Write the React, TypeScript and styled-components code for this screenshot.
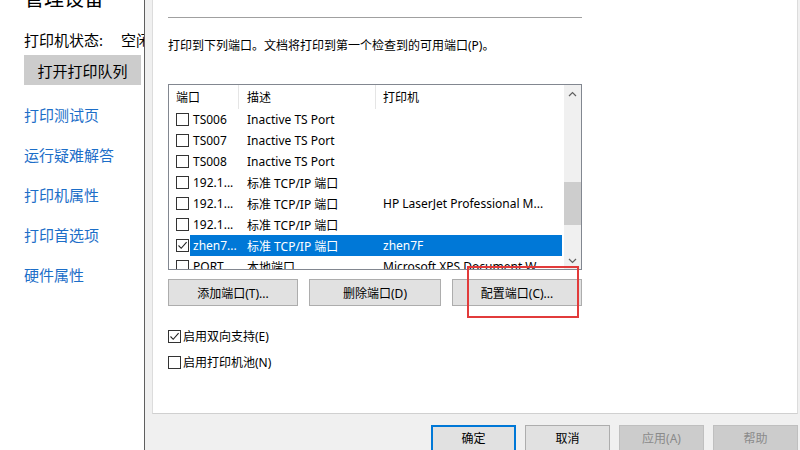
import React from "react";
import styled, { createGlobalStyle } from "styled-components";

const Global = createGlobalStyle`
  html, body { margin: 0; padding: 0; background: #fff; }
  body { width: 800px; height: 450px; overflow: hidden; }
  * { box-sizing: border-box; }
`;

const FONT = `"Segoe UI", "Noto Sans", "Noto Sans CJK SC", sans-serif`;

const Screen = styled.div`
  width: 800px;
  height: 450px;
  display: flex;
  overflow: hidden;
  font-family: ${FONT};
  color: #000;
`;

const LeftPane = styled.div`
  width: 144px;
  flex: none;
  background: #fff;
  overflow: hidden;
  padding-left: 24px;
  display: flex;
  flex-direction: column;
  align-items: flex-start;
`;

const Heading = styled.div`
  font-size: 20px;
  line-height: 28px;
  margin-top: -15px;
  white-space: nowrap;
`;

const StatusRow = styled.div`
  margin-top: 17px;
  font-size: 15px;
  line-height: 20px;
  white-space: nowrap;
  display: flex;
  gap: 18px;
`;

const QueueButton = styled.div`
  margin-top: 5px;
  width: 117px;
  height: 30px;
  background: #cccccc;
  font-size: 15px;
  display: flex;
  align-items: center;
  justify-content: center;
  white-space: nowrap;
`;

const LinkList = styled.div`
  margin-top: 20px;
  display: flex;
  flex-direction: column;
  gap: 20px;
`;

const Link = styled.div`
  font-size: 15px;
  line-height: 20px;
  color: #1c6ec8;
  white-space: nowrap;
`;

const Dialog = styled.div`
  flex: 1;
  background: #f0f0f0;
  border-left: 1px solid #5f5f5f;
  display: flex;
  flex-direction: column;
  min-width: 0;
`;

const Panel = styled.div`
  margin-left: 7px;
  width: 646px;
  height: 414px;
  flex: none;
  background: #fff;
  border-left: 1px solid #dcdcdc;
  border-right: 1px solid #dcdcdc;
  border-bottom: 1px solid #d0d0d0;
  padding-left: 15px;
`;

const Content = styled.div`
  position: relative;
  width: 414px;
  display: flex;
  flex-direction: column;
  font-size: 12px;
`;

const Rule = styled.div`
  margin-top: 17px;
  height: 1px;
  background: #a0a0a0;
`;

const Intro = styled.div`
  margin-top: 20px;
  line-height: 16px;
  white-space: nowrap;
`;

const ListBox = styled.div`
  margin-top: 30px;
  height: 186px;
  border: 1px solid #828790;
  display: flex;
  overflow: hidden;
`;

const ListMain = styled.div`
  flex: 1;
  display: flex;
  flex-direction: column;
  overflow: hidden;
`;

const HeaderRow = styled.div`
  height: 24px;
  flex: none;
  display: grid;
  grid-template-columns: 70px 137px 1fr;
`;

const HeaderCell = styled.div<{ $pad: number; $sep?: boolean }>`
  padding-left: ${(p) => p.$pad}px;
  display: flex;
  align-items: center;
  border-right: ${(p) => (p.$sep ? "1px solid #e5e5e5" : "none")};
  white-space: nowrap;
`;

const Row = styled.div`
  height: 21px;
  flex: none;
  display: flex;
  align-items: center;
`;

const BoxSlot = styled.div`
  width: 21px;
  flex: none;
  padding-left: 7px;
  display: flex;
  align-items: center;
`;

const Cells = styled.div<{ $sel?: boolean }>`
  flex: 1;
  margin-right: 2px;
  height: 100%;
  display: grid;
  grid-template-columns: 49px 137px 1fr;
  align-items: center;
  background: ${(p) => (p.$sel ? "#0078d7" : "transparent")};
  color: ${(p) => (p.$sel ? "#fff" : "#000")};
`;

const Cell = styled.div<{ $pad: number }>`
  padding-left: ${(p) => p.$pad}px;
  white-space: nowrap;
  overflow: hidden;
`;

const ScrollBar = styled.div`
  width: 17px;
  flex: none;
  background: #f0f0f0;
  display: flex;
  flex-direction: column;
  align-items: center;
`;

const Arrow = styled.div`
  height: 17px;
  width: 17px;
  flex: none;
  display: flex;
  align-items: center;
  justify-content: center;
`;

const Track = styled.div`
  flex: 1;
  width: 100%;
  padding-top: 80px;
`;

const Thumb = styled.div`
  width: 100%;
  height: 43px;
  background: #cdcdcd;
`;

const ButtonRow = styled.div`
  margin-top: 9px;
  display: flex;
  justify-content: space-between;
`;

const Btn = styled.div<{ $w: number }>`
  width: ${(p) => p.$w}px;
  height: 27px;
  background: #e1e1e1;
  border: 1px solid #adadad;
  display: flex;
  align-items: center;
  justify-content: center;
  white-space: nowrap;
`;

const OptionRow = styled.div<{ $top: number }>`
  margin-top: ${(p) => p.$top}px;
  height: 16px;
  display: flex;
  align-items: center;
  gap: 2px;
  white-space: nowrap;
`;

const Box = styled.div`
  width: 13px;
  height: 13px;
  border: 1px solid #333;
  background: #fff;
  display: flex;
  align-items: center;
  justify-content: center;
  flex: none;
`;

const Highlight = styled.div`
  position: absolute;
  left: 299px;
  top: 266px;
  width: 112px;
  height: 52px;
  border: 2px solid #e23b3b;
`;

const Footer = styled.div`
  padding-top: 11px;
  padding-left: 286px;
  display: flex;
  gap: 9px;
  font-size: 12px;
`;

const FootBtn = styled.div<{ $kind?: "default" | "disabled" }>`
  width: 85px;
  height: 30px;
  flex: none;
  display: flex;
  align-items: center;
  justify-content: center;
  padding-bottom: 4px;
  background: ${(p) => (p.$kind === "disabled" ? "#cccccc" : "#e1e1e1")};
  color: ${(p) => (p.$kind === "disabled" ? "#8a8a8a" : "#000")};
  border: ${(p) =>
    p.$kind === "default"
      ? "2px solid #0078d7"
      : p.$kind === "disabled"
      ? "1px solid #bfbfbf"
      : "1px solid #adadad"};
  white-space: nowrap;
`;

const Check = () => (
  <svg width="11" height="11" viewBox="0 0 11 11">
    <path d="M1.5 5.5 L4.2 8.3 L9.6 2.2" fill="none" stroke="#222" strokeWidth="1.1" />
  </svg>
);

const CheckBox = ({ checked }: { checked?: boolean }) => <Box>{checked && <Check />}</Box>;

const rows = [
  { port: "TS006", desc: "Inactive TS Port", printer: "" },
  { port: "TS007", desc: "Inactive TS Port", printer: "" },
  { port: "TS008", desc: "Inactive TS Port", printer: "" },
  { port: "192.1...", desc: "标准 TCP/IP 端口", printer: "" },
  { port: "192.1...", desc: "标准 TCP/IP 端口", printer: "HP LaserJet Professional M..." },
  { port: "192.1...", desc: "标准 TCP/IP 端口", printer: "" },
  { port: "zhen7...", desc: "标准 TCP/IP 端口", printer: "zhen7F", checked: true, sel: true },
  { port: "PORT...", desc: "本地端口", printer: "Microsoft XPS Document W..." },
];

export default function App() {
  return (
    <>
      <Global />
      <Screen>
        <LeftPane>
          <Heading>管理设备</Heading>
          <StatusRow>
            <span>打印机状态:</span>
            <span>空闲</span>
          </StatusRow>
          <QueueButton>打开打印队列</QueueButton>
          <LinkList>
            <Link>打印测试页</Link>
            <Link>运行疑难解答</Link>
            <Link>打印机属性</Link>
            <Link>打印首选项</Link>
            <Link>硬件属性</Link>
          </LinkList>
        </LeftPane>
        <Dialog>
          <Panel>
            <Content>
              <Rule />
              <Intro>打印到下列端口。文档将打印到第一个检查到的可用端口(P)。</Intro>
              <ListBox>
                <ListMain>
                  <HeaderRow>
                    <HeaderCell $pad={7} $sep>端口</HeaderCell>
                    <HeaderCell $pad={8} $sep>描述</HeaderCell>
                    <HeaderCell $pad={7}>打印机</HeaderCell>
                  </HeaderRow>
                  {rows.map((r, i) => (
                    <Row key={i}>
                      <BoxSlot>
                        <CheckBox checked={r.checked} />
                      </BoxSlot>
                      <Cells $sel={r.sel}>
                        <Cell $pad={3}>{r.port}</Cell>
                        <Cell $pad={8}>{r.desc}</Cell>
                        <Cell $pad={7}>{r.printer}</Cell>
                      </Cells>
                    </Row>
                  ))}
                </ListMain>
                <ScrollBar>
                  <Arrow>
                    <svg width="9" height="6" viewBox="0 0 9 6">
                      <path d="M1 5 L4.5 1.5 L8 5" fill="none" stroke="#606060" strokeWidth="1.2" />
                    </svg>
                  </Arrow>
                  <Track>
                    <Thumb />
                  </Track>
                  <Arrow>
                    <svg width="9" height="6" viewBox="0 0 9 6">
                      <path d="M1 1 L4.5 4.5 L8 1" fill="none" stroke="#606060" strokeWidth="1.2" />
                    </svg>
                  </Arrow>
                </ScrollBar>
              </ListBox>
              <ButtonRow>
                <Btn $w={130}>添加端口(T)...</Btn>
                <Btn $w={132}>删除端口(D)</Btn>
                <Btn $w={130}>配置端口(C)...</Btn>
              </ButtonRow>
              <OptionRow $top={22}>
                <CheckBox checked />
                <span>启用双向支持(E)</span>
              </OptionRow>
              <OptionRow $top={10}>
                <CheckBox />
                <span>启用打印机池(N)</span>
              </OptionRow>
              <Highlight />
            </Content>
          </Panel>
          <Footer>
            <FootBtn $kind="default">确定</FootBtn>
            <FootBtn>取消</FootBtn>
            <FootBtn $kind="disabled">应用(A)</FootBtn>
            <FootBtn $kind="disabled">帮助</FootBtn>
          </Footer>
        </Dialog>
      </Screen>
    </>
  );
}
